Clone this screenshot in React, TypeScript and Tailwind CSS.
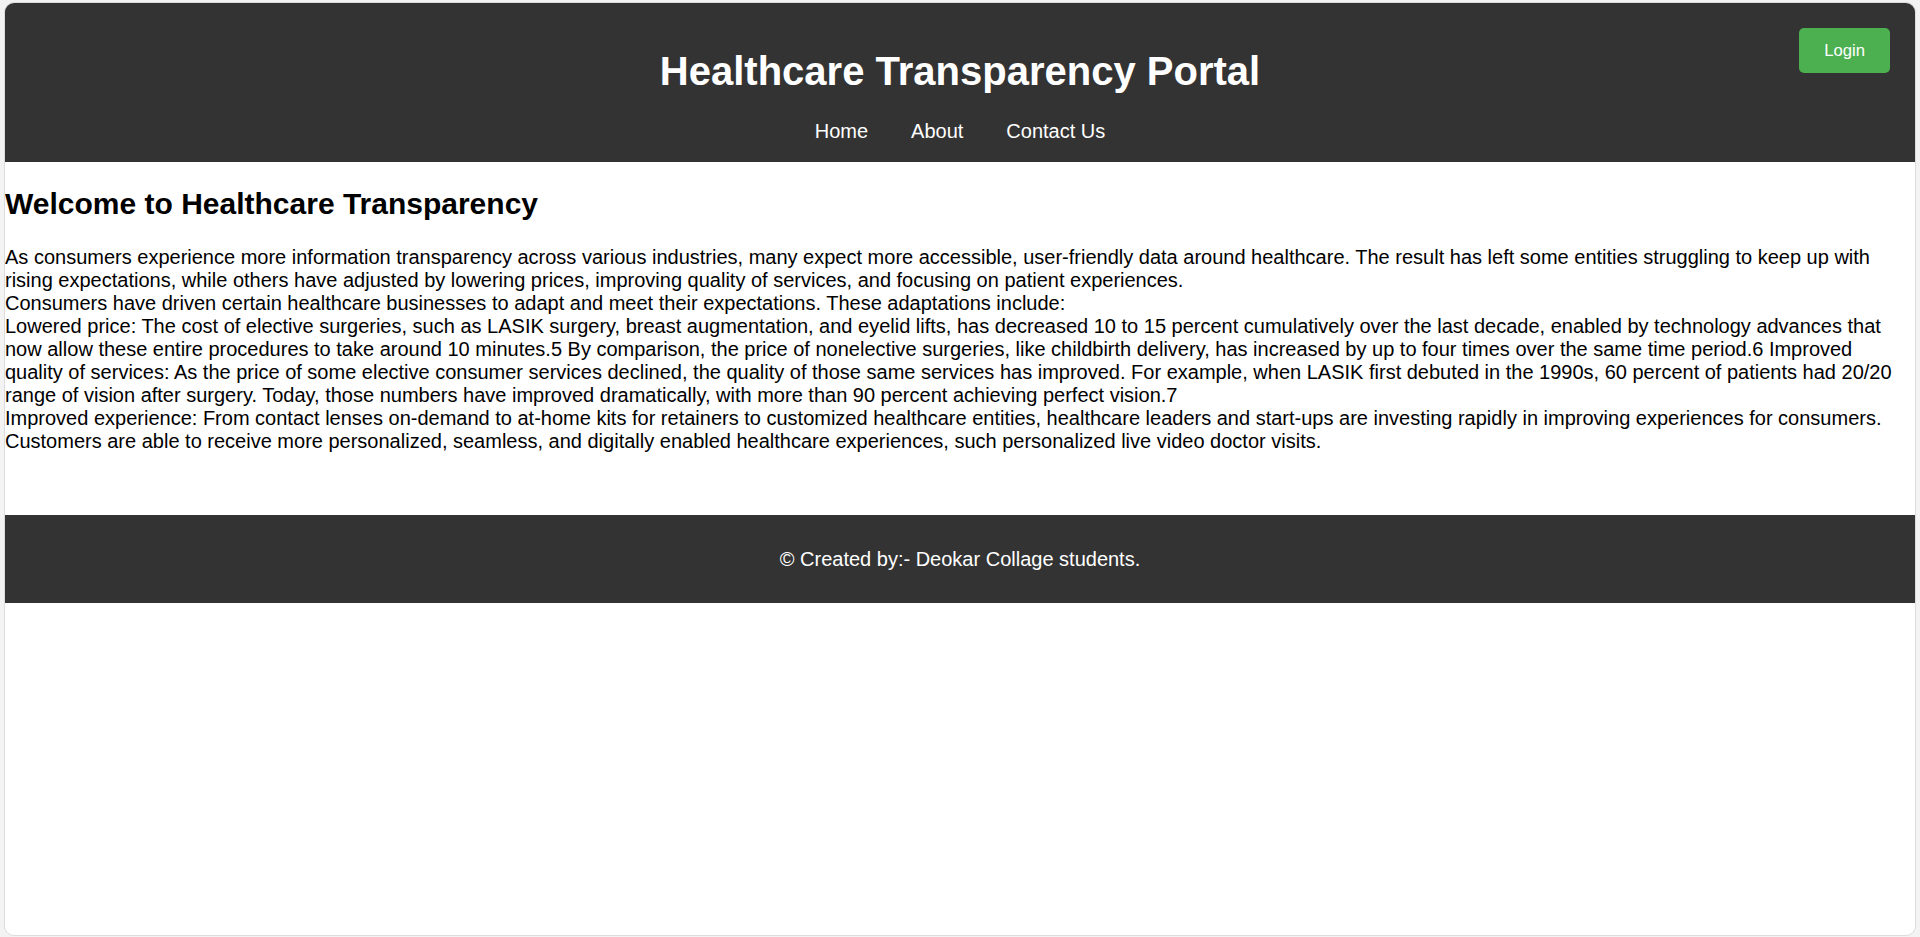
export default function App() {
    const navLinks = ['Home', 'About', 'Contact Us'];

    return (
        <div className="h-[937px] bg-[#f3f3f3] pl-[4px] pr-[4px] pt-[2px] pb-[1px] font-['Liberation_Sans',Arial,sans-serif]">
            <div className="h-full overflow-hidden rounded-[10px] border border-[#dcdcdc] bg-white text-black">
                {/* HEADER */}
                <header className="relative bg-[#333333] pt-[45px] pb-[19px] text-center text-white">
                    <h1 className="mb-[26px] text-[40px] font-bold leading-[46px]">Healthcare Transparency Portal</h1>
                    <nav className="flex justify-center gap-[43px] text-[20px] leading-[23px]">
                        {navLinks.map((link) => (
                            <a key={link} href="#" className="text-white">
                                {link}
                            </a>
                        ))}
                    </nav>
                    <button className="absolute right-[25px] top-[25px] rounded-[5px] bg-[#4caf50] px-[25px] py-[13px] text-[16.67px] leading-[19px] text-white">
                        Login
                    </button>
                </header>

                {/* CONTENT */}
                <main>
                    <h2 className="mt-[24px] mb-[25px] text-[30px] font-bold leading-[35px]">Welcome to Healthcare Transparency</h2>
                    <p className="mb-[62px] text-[20px] leading-[23px]">
                        As consumers experience more information transparency across various industries, many expect more accessible, user-friendly data around healthcare. The result has left some entities struggling to keep up with rising expectations, while others have adjusted by lowering prices, improving quality of services, and focusing on patient experiences.
                        <br />
                        Consumers have driven certain healthcare businesses to adapt and meet their expectations. These adaptations include:
                        <br />
                        Lowered price: The cost of elective surgeries, such as LASIK surgery, breast augmentation, and eyelid lifts, has decreased 10 to 15 percent cumulatively over the last decade, enabled by technology advances that now allow these entire procedures to take around 10 minutes.5 By comparison, the price of nonelective surgeries, like childbirth delivery, has increased by up to four times over the same time period.6 Improved quality of services: As the price of some elective consumer services declined, the quality of those same services has improved. For example, when LASIK first debuted in the 1990s, 60 percent of patients had 20/20 range of vision after surgery. Today, those numbers have improved dramatically, with more than 90 percent achieving perfect vision.7
                        <br />
                        Improved experience: From contact lenses on-demand to at-home kits for retainers to customized healthcare entities, healthcare leaders and start-ups are investing rapidly in improving experiences for consumers. Customers are able to receive more personalized, seamless, and digitally enabled healthcare experiences, such personalized live video doctor visits.
                    </p>
                </main>

                {/* FOOTER */}
                <footer className="bg-[#333333] pt-[33px] pb-[32px] text-center text-[20px] leading-[23px] text-white">
                    <p>© Created by:- Deokar Collage students.</p>
                </footer>
            </div>
        </div>
    );
}
